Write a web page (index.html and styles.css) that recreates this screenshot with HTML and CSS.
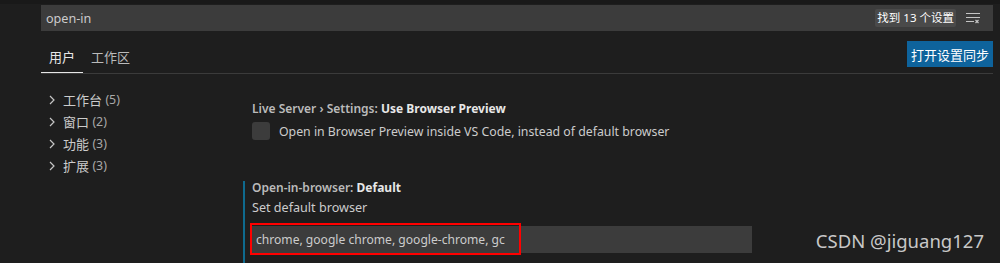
FILE: index.html
```html
<!DOCTYPE html>
<html lang="zh-CN">
<head>
  <meta charset="UTF-8">
  <title>设置</title>
  <link rel="stylesheet" href="styles.css">
</head>
<body>

  <div class="header">
    <div class="search">
      <span class="search-text">open-in</span>
      <span class="badge">找到 13 个设置</span>
      <svg class="filter-icon" width="16" height="12" viewBox="0 0 16 12">
        <path d="M1 1.5h14M1 5.5h14M1 9.5h8" stroke="#c5c5c5" stroke-width="1.2" fill="none"/>
        <path d="M10.5 8l3 3M13.5 8l-3 3" stroke="#c5c5c5" stroke-width="1.2" fill="none"/>
      </svg>
    </div>
    <div class="tab-row">
      <div class="tabs">
        <span class="tab active">用户</span>
        <span class="tab">工作区</span>
      </div>
      <button class="sync-btn">打开设置同步</button>
    </div>
  </div>

  <div class="main">
    <ul class="tree">
      <li><svg class="chev" width="6" height="10" viewBox="0 0 6 10"><path d="M1 1l4 4-4 4" stroke="#c5c5c5" stroke-width="1.2" fill="none"/></svg>工作台 <span class="count">(5)</span></li>
      <li><svg class="chev" width="6" height="10" viewBox="0 0 6 10"><path d="M1 1l4 4-4 4" stroke="#c5c5c5" stroke-width="1.2" fill="none"/></svg>窗口 <span class="count">(2)</span></li>
      <li><svg class="chev" width="6" height="10" viewBox="0 0 6 10"><path d="M1 1l4 4-4 4" stroke="#c5c5c5" stroke-width="1.2" fill="none"/></svg>功能 <span class="count">(3)</span></li>
      <li><svg class="chev" width="6" height="10" viewBox="0 0 6 10"><path d="M1 1l4 4-4 4" stroke="#c5c5c5" stroke-width="1.2" fill="none"/></svg>扩展 <span class="count">(3)</span></li>
    </ul>

    <div class="settings">
      <div class="setting">
        <div class="setting-title">Live Server › Settings: <b>Use Browser Preview</b></div>
        <label class="check-row">
          <span class="checkbox"></span>
          Open in Browser Preview inside VS Code, instead of default browser
        </label>
      </div>

      <div class="setting focused">
        <div class="setting-title">Open-in-browser: <b>Default</b></div>
        <div class="setting-desc">Set default browser</div>
        <div class="input-wrap">
          <div class="text-input">chrome, google chrome, google-chrome, gc</div>
          <div class="mark"></div>
        </div>
      </div>
    </div>
  </div>

  <div class="watermark">CSDN @jiguang127</div>

</body>
</html>
```

FILE: styles.css
```css
body {
  margin: 0;
  height: 263px;
  overflow: hidden;
  background-color: #1e1e1e;
  color: #cccccc;
  font-family: 'Noto Sans', 'Noto Sans CJK SC', sans-serif;
  font-size: 13px;
  border-top: 4px solid #191919;
  box-sizing: border-box;
  position: relative;
}

.header {
  padding: 1px 7px 0 41px;
}

.search {
  height: 26px;
  background-color: #3c3c3c;
  display: flex;
  align-items: center;
  padding: 0 12px 0 5px;
}

.search-text {
  flex: 1;
  color: #cccccc;
  font-size: 12.6px;
}

.badge {
  background-color: #4a4a4a;
  color: #ffffff;
  font-size: 11.5px;
  line-height: 18px;
  padding: 0 2px;
  border-radius: 2px;
}

.filter-icon {
  margin-left: 9px;
}

.tab-row {
  display: flex;
  justify-content: space-between;
  align-items: flex-start;
  margin-top: 10px;
  border-bottom: 1px solid #3b3b3b;
}

.tabs {
  display: flex;
}

.tab {
  padding: 0 8px;
  height: 32px;
  line-height: 32px;
  color: #bbbbbb;
  box-sizing: border-box;
}

.tab.active {
  color: #e7e7e7;
  border-bottom: 1px solid #e7e7e7;
}

.sync-btn {
  background-color: #0e639c;
  color: #ffffff;
  border: none;
  font-family: inherit;
  font-size: 13px;
  height: 26px;
  padding: 0 4px;
  cursor: pointer;
}

.main {
  display: flex;
  padding-left: 41px;
}

.tree {
  list-style: none;
  margin: 0;
  padding: 15px 0 0 8px;
  width: 194px;
}

.tree li {
  height: 22px;
  line-height: 22px;
  color: #cccccc;
  display: flex;
  align-items: center;
  white-space: pre;
}

.chev {
  margin-right: 8px;
}

.count {
  color: #a8a8a8;
  font-size: 12.4px;
}

.settings {
  flex: 1;
}

.setting {
  padding-left: 9px;
  padding-top: 26px;
}

.setting-title {
  line-height: 18px;
  font-weight: 600;
  color: #bbbbbb;
  font-size: 12px;
}

.setting-title b {
  color: #e7e7e7;
  font-weight: 700;
}

.check-row {
  display: flex;
  align-items: center;
  margin-top: 4px;
  height: 18px;
  font-size: 12.3px;
}

.checkbox {
  width: 18px;
  height: 18px;
  background-color: #3c3c3c;
  border-radius: 3px;
  margin-right: 9px;
}

.setting.focused {
  margin-top: 41px;
  padding-top: 0;
  padding-left: 7px;
  border-left: 2px solid #0f6a8e;
  height: 90px;
}

.focused .setting-title {
  line-height: 14px;
}

.setting-desc {
  margin-top: 4px;
  line-height: 18px;
  font-size: 12.6px;
}

.input-wrap {
  position: relative;
  margin-top: 9px;
  width: 500px;
}

.text-input {
  height: 27px;
  line-height: 27px;
  background-color: #3c3c3c;
  padding-left: 4px;
  color: #cccccc;
  font-size: 12.1px;
}

.mark {
  position: absolute;
  left: -2px;
  top: -3px;
  width: 267px;
  height: 28px;
  border: 2px solid #ff0000;
}

.watermark {
  position: absolute;
  right: 16px;
  top: 224px;
  font-size: 18.5px;
  color: #c8c8c8;
  font-family: 'Noto Sans', sans-serif;
}
```
